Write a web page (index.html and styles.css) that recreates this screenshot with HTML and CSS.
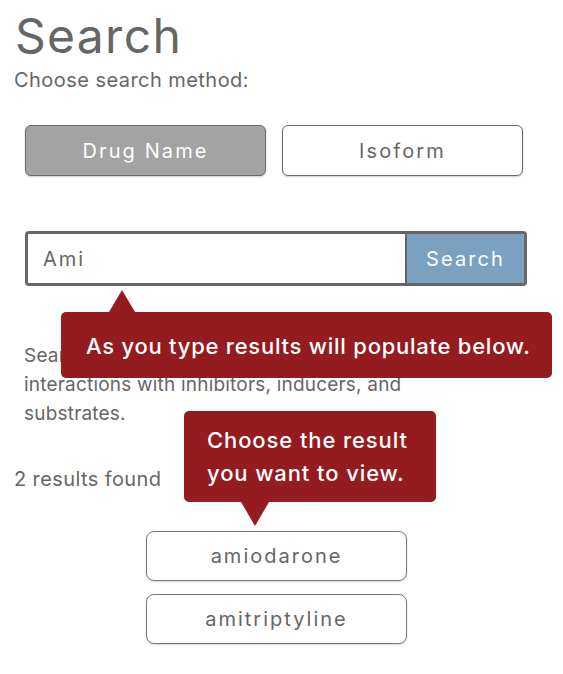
FILE: index.html
```html
<!DOCTYPE html>
<html lang="en">
<head>
<meta charset="utf-8">
<title>Search</title>
<link rel="stylesheet" href="styles.css">
</head>
<body>
<main class="page">
  <h1 class="title">Search</h1>
  <p class="lead">Choose search method:</p>
  <div class="methods">
    <button class="method active">Drug Name</button>
    <button class="method">Isoform</button>
  </div>
  <div class="search-box">
    <span class="query">Ami</span>
    <button class="search-btn">Search</button>
  </div>
  <p class="desc">Search by drug name to find potential interactions with inhibitors, inducers, and substrates.</p>
  <p class="count">2 results found</p>
  <div class="results">
    <button class="result">amiodarone</button>
    <button class="result">amitriptyline</button>
  </div>

  <div class="tip tip-type">As you type results will populate below.</div>
  <div class="tip tip-choose">Choose the result<br>you want to view.</div>
</main>
</body>
</html>
```
FILE: styles.css
```css
* { box-sizing: border-box; }
html, body { margin: 0; padding: 0; background: #fff; }
body {
  font-family: Inter, Roboto, "Liberation Sans", sans-serif;
  color: #666;
}
.page {
  position: relative;
  width: 563px;
  height: 674px;
  padding: 8px 14px 0 14px;
  overflow: hidden;
}
.title {
  margin: 0 0 0 1px;
  font-size: 48px;
  font-weight: 400;
  line-height: 56px;
  letter-spacing: 1.3px;
  color: #666;
}
.lead {
  margin: 3px 0 0 0;
  font-size: 20px;
  line-height: 26px;
  letter-spacing: 0.45px;
}
.methods {
  display: flex;
  gap: 16px;
  margin: 32px 0 0 11px;
}
.method {
  width: 241px;
  height: 51px;
  border: 1.5px solid #6a6a6a;
  border-radius: 6px;
  background: #fff;
  color: #666;
  font-family: inherit;
  font-size: 20px;
  letter-spacing: 2.1px;
  box-shadow: 0 1px 2px rgba(0,0,0,0.2);
  padding: 0;
}
.method.active {
  background: #a3a3a3;
  color: #fff;
}
.search-box {
  display: flex;
  align-items: stretch;
  width: 502px;
  height: 55px;
  margin: 55px 0 0 11px;
  border: 3px solid #666;
  border-radius: 4px;
  overflow: hidden;
}
.query {
  flex: 1;
  display: flex;
  align-items: center;
  padding-left: 15px;
  font-size: 20px;
  letter-spacing: 2px;
}
.search-btn {
  width: 119px;
  background: #7ba0c0;
  color: #fff;
  border: none;
  border-left: 2px solid #666;
  font-family: inherit;
  font-size: 20px;
  letter-spacing: 2.1px;
  padding: 0;
}
.desc {
  margin: 55px 0 0 10px;
  width: 430px;
  font-size: 19px;
  line-height: 29px;
  letter-spacing: 0.2px;
}
.count {
  margin: 38px 0 0 0;
  font-size: 20px;
  line-height: 26px;
  letter-spacing: 0.4px;
}
.results {
  display: flex;
  flex-direction: column;
  gap: 13px;
  margin: 39px 0 0 132px;
}
.result {
  width: 261px;
  height: 50px;
  border: 1.5px solid #777;
  border-radius: 8px;
  background: #fff;
  color: #666;
  font-family: inherit;
  font-size: 20px;
  letter-spacing: 2px;
  box-shadow: 0 1px 2px rgba(0,0,0,0.15);
  padding: 0;
}
.tip {
  position: absolute;
  background: #941b1f;
  color: #fff;
  border-radius: 5px;
  font-size: 22px;
  font-weight: 500;
  letter-spacing: 0.75px;
}
.tip::after {
  content: "";
  position: absolute;
  width: 0;
  height: 0;
  border-left: 13px solid transparent;
  border-right: 13px solid transparent;
}
.tip-type {
  left: 61px;
  top: 312px;
  width: 491px;
  height: 66px;
  padding: 19px 0 0 25px;
  line-height: 30px;
}
.tip-type::after {
  left: 48px;
  top: -22px;
  border-bottom: 22px solid #941b1f;
}
.tip-choose {
  left: 184px;
  top: 411px;
  width: 252px;
  height: 91px;
  padding: 13px 0 0 23px;
  line-height: 33px;
  letter-spacing: 0.9px;
}
.tip-choose::after {
  left: 57px;
  bottom: -24px;
  border-left-width: 14px;
  border-right-width: 14px;
  border-top: 24px solid #941b1f;
}
```
